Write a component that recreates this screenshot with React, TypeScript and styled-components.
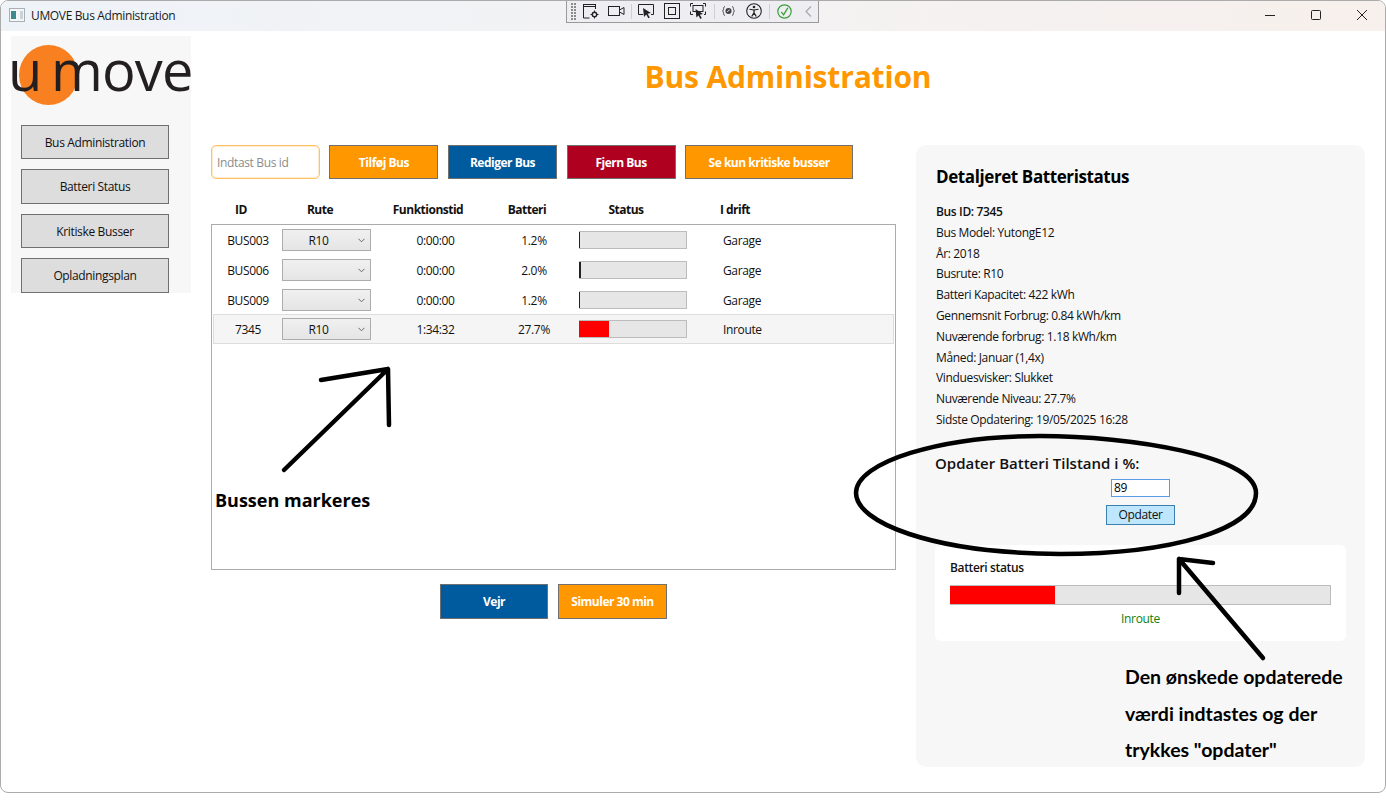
import styled, { createGlobalStyle, css } from "styled-components";

import type { ReactElement } from "react";

const FONT = `"Open Sans", "Noto Sans", sans-serif`;

const uiText = css`
	font-family: ${FONT};
	font-size: 12px;
	letter-spacing: -0.35px;
`;

const uiStrong = css`
	font-family: ${FONT};
	font-size: 12px;
	font-weight: 700;
	letter-spacing: -0.5px;
`;

interface BusRow {
	id: string;
	route: string;
	uptime: string;
	battery: number;
	state: string;
}

const BUSES: BusRow[] = [
	{ id: "BUS003", route: "R10", uptime: "0:00:00", battery: 1.2, state: "Garage" },
	{ id: "BUS006", route: "", uptime: "0:00:00", battery: 2.0, state: "Garage" },
	{ id: "BUS009", route: "", uptime: "0:00:00", battery: 1.2, state: "Garage" },
	{ id: "7345", route: "R10", uptime: "1:34:32", battery: 27.7, state: "Inroute" },
];

const DETAILS = [
	"Bus Model: YutongE12",
	"År: 2018",
	"Busrute: R10",
	"Batteri Kapacitet: 422 kWh",
	"Gennemsnit Forbrug: 0.84 kWh/km",
	"Nuværende forbrug: 1.18 kWh/km",
	"Måned: Januar (1,4x)",
	"Vinduesvisker: Slukket",
	"Nuværende Niveau: 27.7%",
	"Sidste Opdatering: 19/05/2025 16:28",
];

const NAV_ITEMS = ["Bus Administration", "Batteri Status", "Kritiske Busser", "Opladningsplan"];

function fillColor(battery: number): string {
	return battery < 5 ? "#222222" : "#ff0000";
}

function DebugToolbar(): ReactElement {
	return (
		<Toolbar>
			<Grip />
			<ToolIcon width="16" height="16" viewBox="0 0 16 16">
				<path d="M.5 1.5h12M.5 3.5h12M.5 1v14h6M12.5 1v5" stroke="#222" fill="none" />
				<circle cx="11.5" cy="11.5" r="2.2" fill="none" stroke="#222" strokeWidth="1.4" />
				<path d="M11.5 7.5v1.6M11.5 13.9v1.6M7.5 11.5h1.6M13.9 11.5h1.6" stroke="#222" />
			</ToolIcon>
			<ToolIcon $gap={9} width="17" height="16" viewBox="0 0 17 16">
				<rect x="0.5" y="3.5" width="11" height="9" fill="none" stroke="#222" />
				<path d="M11.5 7l4.5-2.5v7L11.5 9" fill="none" stroke="#222" />
			</ToolIcon>
			<Separator $space={6} />
			<ToolIcon width="17" height="17" viewBox="0 0 17 17">
				<path d="M5 11.5H0.5v-10h15v10H13" fill="none" stroke="#222" />
				<path d="M5 5l8 5-3.4.8 2.2 3.7-1.4.8-2.2-3.7L6 14z" fill="#222" />
			</ToolIcon>
			<ToolIcon $gap={9} width="16" height="16" viewBox="0 0 16 16">
				<rect x="0.5" y="0.5" width="15" height="15" fill="none" stroke="#222" />
				<rect x="4.5" y="4.5" width="7" height="7" fill="none" stroke="#222" />
			</ToolIcon>
			<ToolIcon $gap={10} width="17" height="17" viewBox="0 0 17 17">
				<path d="M3 0.5H0.5v3M13 0.5h2.5v3M3 11.5H0.5v-3M15.5 8.5v3H14" fill="none" stroke="#222" />
				<rect x="3" y="2.5" width="10" height="6" fill="none" stroke="#222" />
				<path d="M5.5 6l7.5 5-3.2.7 2 3.4-1.4.8-2-3.4L6.4 14.5z" fill="#222" />
			</ToolIcon>
			<Separator />
			<ToolIcon width="13" height="14" viewBox="0 0 14 14">
				<path d="M3 2C1.5 2 2 6 .7 7 2 8 1.5 12 3 12M11 2c1.5 0 1 4 2.3 5-1.3 1-.8 5-2.3 5" fill="none" stroke="#444" />
				<circle cx="7" cy="7" r="3.3" fill="#444" />
				<path d="M5.5 7.8l2.8-2" stroke="#eeeef2" />
			</ToolIcon>
			<ToolIcon $gap={11} width="16" height="16" viewBox="0 0 16 16">
				<circle cx="8" cy="8" r="7.3" fill="none" stroke="#222" strokeWidth="1.1" />
				<circle cx="8" cy="4" r="1.3" fill="#222" />
				<path d="M3.5 6.2L8 7l4.5-.8" fill="none" stroke="#222" strokeWidth="1.1" />
				<path d="M8 7v2.8M8 9.8l-2.3 3.7M8 9.8l2.3 3.7" fill="none" stroke="#222" strokeWidth="1.3" />
			</ToolIcon>
			<Separator />
			<ToolIcon width="15" height="15" viewBox="0 0 15 15">
				<circle cx="7.5" cy="7.5" r="6.7" fill="none" stroke="#3aa03a" strokeWidth="1.2" />
				<path d="M4.3 7.8l2.3 3 4.2-7" fill="none" stroke="#3aa03a" strokeWidth="1.3" />
			</ToolIcon>
			<ToolIcon $gap={13} width="7" height="11" viewBox="0 0 7 11">
				<path d="M6 .5L1 5.5l5 5" fill="none" stroke="#a8a8ac" strokeWidth="1.2" />
			</ToolIcon>
		</Toolbar>
	);
}

function Annotations(): ReactElement {
	return (
		<>
			<Scribbles viewBox="0 0 1386 807" fill="none" stroke="#000" strokeLinecap="round" strokeLinejoin="round">
				<path strokeWidth="4.5" d="M284 470L388 369M321 380L388 369L389 425" />
				<path
					strokeWidth="4.5"
					d="M1256 493C1256 456 1130 436 1040 436C940 436 856 462 856 493C856 522 930 553 1060 554C1170 554 1256 530 1256 493Z"
				/>
				<path strokeWidth="4.5" d="M1263 658L1179 559M1213 563L1179 559L1179 593" />
			</Scribbles>
			<ArrowCaption>Bussen markeres</ArrowCaption>
			<UpdateCaption>
				Den ønskede opdaterede
				<br />
				værdi indtastes og der
				<br />
				trykkes "opdater"
			</UpdateCaption>
		</>
	);
}

export default function App(): ReactElement {
	return (
		<>
			<GlobalStyle />
			<Window>
				<TitleBar>
					<AppIcon width="16" height="14" viewBox="0 0 16 14">
						<rect x="0.5" y="0.5" width="15" height="13" fill="#f4f6f7" stroke="#a9b0b5" />
						<rect x="2" y="3" width="5" height="8" fill="#3f8a8f" />
						<rect x="11" y="3" width="3" height="8" fill="#c9d3d8" />
					</AppIcon>
					<WindowTitle>UMOVE Bus Administration</WindowTitle>
					<WindowControls>
						<WindowButton>
							<svg width="10" height="10" viewBox="0 0 10 10">
								<path d="M0 5.5h10" stroke="#222" />
							</svg>
						</WindowButton>
						<WindowButton>
							<svg width="10" height="10" viewBox="0 0 10 10">
								<rect x="0.5" y="0.5" width="9" height="9" rx="1" fill="none" stroke="#222" />
							</svg>
						</WindowButton>
						<WindowButton>
							<svg width="10" height="10" viewBox="0 0 10 10">
								<path d="M0 0l10 10M10 0L0 10" stroke="#222" />
							</svg>
						</WindowButton>
					</WindowControls>
				</TitleBar>
				<DebugToolbar />
				<Body>
					<Sidebar>
						<Logo>
							<LogoDot />
							<LogoText>u move</LogoText>
						</Logo>
						<NavList>
							{NAV_ITEMS.map((item) => (
								<NavButton key={item}>{item}</NavButton>
							))}
						</NavList>
					</Sidebar>
					<Content>
						<PageTitle>Bus Administration</PageTitle>
						<Columns>
							<MainColumn>
								<ActionBar>
									<SearchInput placeholder="Indtast Bus id" />
									<ActionButton $bg="#ff9800">Tilføj Bus</ActionButton>
									<ActionButton $bg="#005a9e">Rediger Bus</ActionButton>
									<ActionButton $bg="#b00020">Fjern Bus</ActionButton>
									<ActionButton $bg="#ff9800" $width={168}>
										Se kun kritiske busser
									</ActionButton>
								</ActionBar>
								<ListHeader>
									<span>ID</span>
									<span>Rute</span>
									<span>Funktionstid</span>
									<span>Batteri</span>
									<span>Status</span>
									<span>I drift</span>
								</ListHeader>
								<BusList>
									{BUSES.map((bus) => (
										<BusItem key={bus.id} $selected={bus.id === "7345"}>
											<span>{bus.id}</span>
											<Combo>
												<ComboValue>{bus.route}</ComboValue>
												<svg width="7" height="5" viewBox="0 0 7 5">
													<path d="M.5 .8l3 3 3-3" fill="none" stroke="#666" />
												</svg>
											</Combo>
											<span>{bus.uptime}</span>
											<span>{bus.battery.toFixed(1)}%</span>
											<SmallBar>
												<BarFill
													$color={fillColor(bus.battery)}
													style={{ width: `${Math.max(bus.battery, 1)}%` }}
												/>
											</SmallBar>
											<StateText>{bus.state}</StateText>
										</BusItem>
									))}
								</BusList>
								<FooterBar>
									<ActionButton $bg="#005a9e" $width={108} $height={35}>
										Vejr
									</ActionButton>
									<ActionButton $bg="#ff9800" $height={35}>
										Simuler 30 min
									</ActionButton>
								</FooterBar>
							</MainColumn>
							<DetailPanel>
								<PanelTitle>Detaljeret Batteristatus</PanelTitle>
								<DetailList>
									<DetailLine $strong>Bus ID: 7345</DetailLine>
									{DETAILS.map((line) => (
										<DetailLine key={line}>{line}</DetailLine>
									))}
								</DetailList>
								<UpdateTitle>Opdater Batteri Tilstand i %:</UpdateTitle>
								<UpdateInput defaultValue="89" />
								<UpdateButton>Opdater</UpdateButton>
								<StatusCard>
									<StatusLabel>Batteri status</StatusLabel>
									<WideBar>
										<BarFill $color="#ff0000" style={{ width: "27.7%" }} />
									</WideBar>
									<StatusState>Inroute</StatusState>
								</StatusCard>
							</DetailPanel>
						</Columns>
					</Content>
				</Body>
				<Annotations />
			</Window>
		</>
	);
}

const GlobalStyle = createGlobalStyle`
	html, body {
		margin: 0;
		background: #ffffff;
	}

	body {
		font-family: ${FONT};
		color: #111111;
	}
`;

const Window = styled.div`
	position: relative;
	box-sizing: border-box;
	width: 1386px;
	height: 793px;
	border: 1px solid #ababab;
	border-radius: 8px;
	background: #ffffff;
	overflow: hidden;
`;

const TitleBar = styled.div`
	display: flex;
	align-items: center;
	box-sizing: border-box;
	height: 30px;
	padding: 0 0 2px 8px;
	background: linear-gradient(90deg, #eef3f8 0%, #f3f2f3 50%, #f7f0ec 100%);
`;

const AppIcon = styled.svg`
	flex: none;
`;

const WindowTitle = styled.span`
	${uiText}
	margin-left: 6px;
	color: #1a1a1a;
`;

const WindowControls = styled.div`
	display: flex;
	margin-left: auto;
`;

const WindowButton = styled.div`
	display: flex;
	align-items: center;
	justify-content: center;
	width: 46px;
	height: 28px;
`;

const Toolbar = styled.div`
	position: absolute;
	top: -1px;
	left: 565px;
	display: flex;
	align-items: center;
	box-sizing: border-box;
	width: 253px;
	height: 23px;
	padding-left: 4px;
	background: #eeeef2;
	border: 1px solid #9a9a9a;
	border-top: none;
`;

const Grip = styled.div`
	width: 6px;
	height: 17px;
	margin-right: 6px;
	background-image: radial-gradient(circle at 1px 1px, #8a8a8a 0.8px, transparent 1px);
	background-size: 3px 3px;
`;

const ToolIcon = styled.svg<{ $gap?: number }>`
	flex: none;
	margin-left: ${(props) => props.$gap ?? 0}px;
`;

const Separator = styled.div<{ $space?: number }>`
	width: 1px;
	height: 15px;
	margin: 0 ${(props) => props.$space ?? 7}px;
	background: #cfcfd3;
`;

const Body = styled.div`
	display: flex;
	align-items: flex-start;
`;

const Sidebar = styled.nav`
	flex: none;
	width: 180px;
	height: 257px;
	margin: 5px 0 0 10px;
	background: #f7f7f7;
`;

const Logo = styled.div`
	position: relative;
	height: 88.9px;
`;

const LogoDot = styled.div`
	position: absolute;
	top: 9px;
	left: 8px;
	width: 59px;
	height: 60px;
	border-radius: 50%;
	background: #f88020;
`;

const LogoText = styled.div`
	position: relative;
	margin-left: -3px;
	font-family: "Open Sans", sans-serif;
	font-size: 56px;
	font-weight: 500;
	line-height: 66px;
	letter-spacing: -0.9px;
	word-spacing: -4px;
	color: #231f20;
	white-space: nowrap;
`;

const NavList = styled.div`
	display: flex;
	flex-direction: column;
	gap: 10px;
	padding-left: 10px;
`;

const NavButton = styled.button`
	${uiText}
	width: 148px;
	height: 34.5px;
	padding: 0;
	background: #dddddd;
	border: 1px solid #707070;
	color: #111111;
`;

const Content = styled.main`
	flex: 1;
	min-width: 0;
`;

const PageTitle = styled.h1`
	margin: 0;
	height: 92px;
	font-size: 30px;
	font-weight: 700;
	line-height: 92px;
	letter-spacing: -0.17px;
	text-align: center;
	color: #ff9800;
`;

const Columns = styled.div`
	display: flex;
	gap: 20px;
	margin-top: 22px;
	padding: 0 20px;
`;

const MainColumn = styled.section`
	flex: none;
	width: 685px;
`;

const ActionBar = styled.div`
	display: flex;
	gap: 9.6px;
`;

const SearchInput = styled.input`
	${uiText}
	box-sizing: border-box;
	width: 108.8px;
	height: 34px;
	padding: 0 5px;
	background: #ffffff;
	border: 1px solid #ffc266;
	border-radius: 5px;
	outline: none;
	box-shadow: inset 0 0 0 1px #ffeacc;

	&::placeholder {
		color: #8c8c8c;
		opacity: 1;
	}
`;

const ActionButton = styled.button<{ $bg: string; $width?: number; $height?: number }>`
	${uiStrong}
	box-sizing: border-box;
	width: ${(props) => props.$width ?? 109}px;
	height: ${(props) => props.$height ?? 34}px;
	padding: 0;
	background: ${(props) => props.$bg};
	border: 1px solid #707070;
	color: #ffffff;
`;

const ListHeader = styled.div`
	${uiStrong}
	display: grid;
	grid-template-columns: 60px 98px 118px 80px 118px 100px;
	height: 20px;
	margin-top: 21px;
	line-height: 20px;
	text-align: center;
`;

const BusList = styled.div`
	box-sizing: border-box;
	height: 346px;
	margin-top: 4px;
	border: 1px solid #ababab;
`;

const BusItem = styled.div<{ $selected: boolean }>`
	${uiText}
	display: grid;
	grid-template-columns: 68px 89px 129px 68px 155px 1fr;
	align-items: center;
	box-sizing: border-box;
	height: 30px;
	margin: ${(props) => (props.$selected ? "-1px" : "0")} 1px 0;
	background: ${(props) => (props.$selected ? "#f5f5f5" : "transparent")};
	border: 1px solid ${(props) => (props.$selected ? "#dddddd" : "transparent")};
	text-align: center;
`;

const Combo = styled.div`
	display: flex;
	align-items: center;
	justify-content: space-between;
	box-sizing: border-box;
	height: 22px;
	padding: 0 5px 0 0;
	background: linear-gradient(180deg, #f0f0f0 0%, #e5e5e5 100%);
	border: 1px solid #acacac;
`;

const ComboValue = styled.span`
	flex: 1;
	padding-right: 4px;
`;

const SmallBar = styled.div`
	box-sizing: border-box;
	width: 108px;
	height: 18px;
	margin-left: 11px;
	background: #e6e6e6;
	border: 1px solid #bcbcbc;
	border-left: none;
`;

const BarFill = styled.div<{ $color: string }>`
	height: 100%;
	background: ${(props) => props.$color};
`;

const StateText = styled.span`
	text-align: left;
`;

const FooterBar = styled.div`
	display: flex;
	justify-content: center;
	gap: 10px;
	margin-top: 14px;
`;

const DetailPanel = styled.aside`
	flex: none;
	box-sizing: border-box;
	width: 449px;
	height: 622px;
	padding: 20px 19px;
	background: #f7f7f7;
	border-radius: 10px;
`;

const PanelTitle = styled.h2`
	margin: 0 0 0 1px;
	font-size: 17px;
	font-weight: 700;
	line-height: 24px;
	letter-spacing: -0.4px;
	color: #000000;
`;

const DetailList = styled.div`
	margin: 13px 0 0 1px;
`;

const DetailLine = styled.div<{ $strong?: boolean }>`
	${uiText}
	font-weight: ${(props) => (props.$strong ? 600 : 400)};
	line-height: 20.8px;
`;

const UpdateTitle = styled.h3`
	margin: 22px 0 0;
	font-size: 15px;
	font-weight: 600;
	line-height: 20px;
`;

const UpdateInput = styled.input`
	${uiText}
	display: block;
	box-sizing: border-box;
	width: 59px;
	height: 18px;
	margin: 6px auto 0;
	padding: 0 2px;
	background: #ffffff;
	border: 1px solid #569de5;
	outline: none;
`;

const UpdateButton = styled.button`
	${uiText}
	display: block;
	box-sizing: border-box;
	width: 69px;
	height: 20px;
	margin: 8px auto 0;
	padding: 0;
	background: #bee6fd;
	border: 1px solid #3c7fb1;
	color: #111111;
`;

const StatusCard = styled.div`
	box-sizing: border-box;
	height: 96px;
	margin-top: 20px;
	padding: 15px;
	background: #ffffff;
	border-radius: 6px;
`;

const StatusLabel = styled.div`
	${uiText}
	font-weight: 600;
	line-height: 16px;
`;

const WideBar = styled.div`
	box-sizing: border-box;
	height: 20px;
	margin-top: 9px;
	background: #e6e6e6;
	border: 1px solid #bcbcbc;
	border-left: none;
`;

const StatusState = styled.div`
	${uiText}
	margin-top: 5px;
	font-weight: 500;
	line-height: 18px;
	text-align: center;
	color: #108010;
`;

const Scribbles = styled.svg`
	position: absolute;
	top: -1px;
	left: -1px;
	width: 1386px;
	height: 807px;
	pointer-events: none;
`;

const ArrowCaption = styled.div`
	position: absolute;
	top: 486px;
	left: 214px;
	font-size: 18px;
	font-weight: 700;
	line-height: 26px;
	color: #000000;
`;

const UpdateCaption = styled.div`
	position: absolute;
	top: 658px;
	left: 1124px;
	font-family: Lato, sans-serif;
	font-size: 19.5px;
	font-weight: 700;
	line-height: 36.5px;
	color: #000000;
`;
